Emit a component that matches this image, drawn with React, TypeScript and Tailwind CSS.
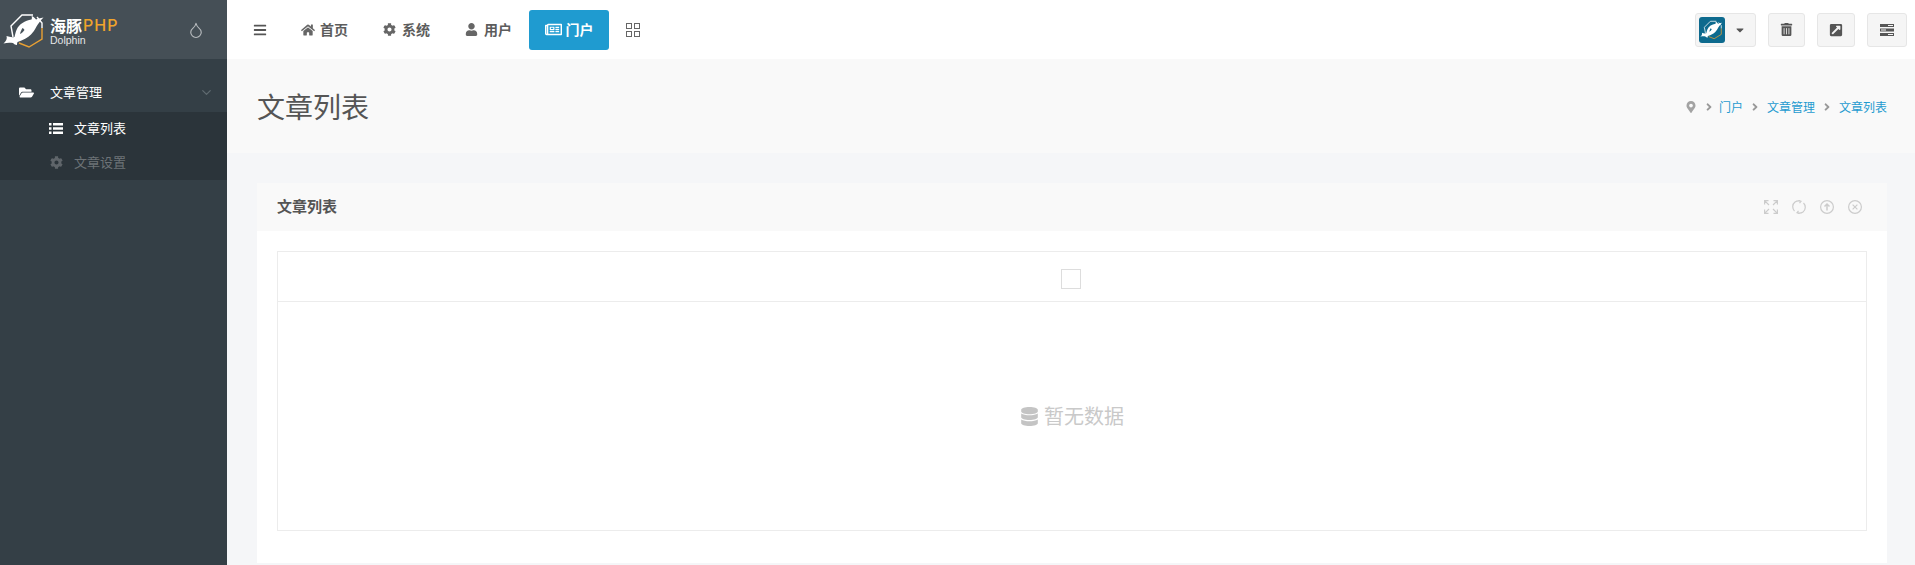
import React from 'react';
import { FaAngleRight, FaBars, FaCaretDown, FaCog, FaDatabase, FaExternalLinkSquareAlt, FaFolderOpen, FaHome, FaMapMarkerAlt, FaRegNewspaper, FaTrashAlt, FaUser } from 'react-icons/fa';
import { ChevronDown, Droplet } from 'lucide-react';

const font = "font-['Noto_Sans_CJK_SC','Liberation_Sans',sans-serif]";

function DolphinMark({ className = '', crease = '#46525a' }: { className?: string; crease?: string }) {
  return (
    <svg viewBox="0 0 44 36" className={className} fill="none">
      <path d="M39 15V26L26 34L16 30" stroke="#e9a033" strokeWidth="1.4" />
      <path d="M39 15V10L34 4" stroke="#fff" strokeWidth="1.4" />
      <path d="M10 24L8 13L19 2H30" stroke="#fff" strokeWidth="1.4" />
      <path
        d="M40.5 4.5C37 5 34.5 6 33 6.5C32 5 30.5 3.5 28.5 3C29 4 29 5.5 28.5 6.5C22 7.5 16 11 13.5 17C12.5 19.5 12 22 11.5 24C9 24.5 6 24 3.5 23C4.5 25.5 3 28.5 0.5 30.5C4 29.5 7 29.5 10 30C11 31 12.5 32 14 32C14 31 14 30 14.5 29C20 27 25 24.5 28 21.5C30 19.5 32 16.5 33.5 13.5C35 11 37.5 7.5 40.5 4.5Z"
        fill="#fff"
      />
      <path d="M19.5 15C18.5 16.5 17.5 18.5 17 21C19 20 20.5 18.5 21.5 17C21 16 20.3 15.5 19.5 15Z" fill={crease} />
    </svg>
  );
}

function ListIcon() {
  return (
    <svg viewBox="0 0 14 11" className="w-[14px] h-[11px]" fill="#fff">
      <path d="M0 0h2.5v2.5H0zM4 0h10v2.5H4zM0 4.2h2.5v2.5H0zM4 4.2h10v2.5H4zM0 8.4h2.5v2.5H0zM4 8.4h10v2.5H4z" />
    </svg>
  );
}

function GridIcon() {
  return (
    <svg viewBox="0 0 14 14" className="w-[14px] h-[14px]" fill="none" stroke="#666" strokeWidth="1">
      <rect x="0.5" y="0.5" width="5" height="5" />
      <rect x="8.5" y="0.5" width="5" height="5" />
      <rect x="0.5" y="8.5" width="5" height="5" />
      <rect x="8.5" y="8.5" width="5" height="5" />
    </svg>
  );
}

function ServerIcon() {
  return (
    <svg viewBox="0 0 14 12" className="w-[14px] h-[12px]">
      <path d="M0 0h14v3H0zM0 4.5h14v3H0zM0 9h14v3H0z" fill="#555" />
      <path d="M8 1h5v1H8zM1 5.5h5v1H1zM8 10h5v1H8z" fill="#f5f5f5" />
    </svg>
  );
}

function BlockTools() {
  return (
    <div className="flex items-center gap-[14px]">
      <svg viewBox="0 0 14 14" className="w-[14px] h-[14px]" fill="none" stroke="#ccc" strokeWidth="1.2">
        <path d="M0.6 4.5V0.6H4.5M0.6 0.6L5 5M13.4 4.5V0.6H9.5M13.4 0.6L9 5M0.6 9.5V13.4H4.5M0.6 13.4L5 9M13.4 9.5V13.4H9.5M13.4 13.4L9 9" />
      </svg>
      <svg viewBox="0 0 14 14" className="w-[14px] h-[14px]" fill="none" stroke="#ccc" strokeWidth="1.2">
        <path d="M2.5 11C0 8.5 0.2 4 3 2C4.8 0.8 6.5 0.6 8 1" />
        <path d="M11.5 3C14 5.5 13.8 10 11 12C9.2 13.2 7.5 13.4 6 13" />
        <path d="M6.5 0.4L9 1.3L7.5 3.2M7.5 13.6L5 12.7L6.5 10.8" />
      </svg>
      <svg viewBox="0 0 14 14" className="w-[14px] h-[14px]" fill="none" stroke="#ccc" strokeWidth="1.2">
        <circle cx="7" cy="7" r="6.4" />
        <path d="M7 10.5V4M4.5 6.5L7 4L9.5 6.5" strokeWidth="1.5" />
      </svg>
      <svg viewBox="0 0 14 14" className="w-[14px] h-[14px]" fill="none" stroke="#ccc" strokeWidth="1.2">
        <circle cx="7" cy="7" r="6.4" />
        <path d="M4.6 4.6L9.4 9.4M9.4 4.6L4.6 9.4" />
      </svg>
    </div>
  );
}

function Sidebar() {
  return (
    <aside className="w-[227px] shrink-0 bg-[#343f46] flex flex-col">
      <div className="h-[59px] bg-[#454f56] flex items-center pl-[3px] pr-[22px] relative">
        <DolphinMark className="w-[44px] h-[36px] mt-[2px] shrink-0" />
        <div className="ml-[3px] flex flex-col mt-[4px]">
          <div className="flex items-center h-[16px] leading-[16px]">
            <span className="text-[16px] leading-[16px] font-bold text-white">海豚</span>
            <span className="text-[16px] leading-[16px] font-['Inter',sans-serif] font-medium text-[#f0a42c] tracking-[1px] ml-[1px]">PHP</span>
          </div>
          <span className="text-[10.5px] leading-[10.5px] mt-[2px] text-[#e4e6e7] font-['Liberation_Sans',sans-serif]">Dolphin</span>
        </div>
        <Droplet size={18} color="#b8bcbf" strokeWidth={1.5} className="ml-auto" />
      </div>
      <div className="mt-[15px]">
        <div className="h-[38px] flex items-center pl-[19px] pr-[13px] text-white text-[13px] pb-[2px]">
          <FaFolderOpen size={15} color="#fff" />
          <span className="ml-[16px]">文章管理</span>
          <ChevronDown size={15} color="#5f6a70" className="ml-auto" />
        </div>
        <div className="bg-[#2b343a] h-[68px]">
          <div className="h-[32px] flex items-center pl-[49px] text-white text-[13px]">
            <ListIcon />
            <span className="ml-[11px]">文章列表</span>
          </div>
          <div className="h-[36px] flex items-center pl-[50px] text-[#6d7377] text-[13px]">
            <FaCog size={13} color="#5f656a" />
            <span className="ml-[11px]">文章设置</span>
          </div>
        </div>
      </div>
    </aside>
  );
}

function TopBar() {
  return (
    <header className="h-[59px] bg-white shrink-0 flex items-center pl-[26px] pr-[8px]">
      <FaBars size={14} color="#555" />
      <div className="flex items-center ml-[34px] text-[14px] font-semibold text-[#5c5c5c]">
        <div className="w-[82px] flex items-center">
          <FaHome size={14} color="#666" />
          <span className="ml-[5px]">首页</span>
        </div>
        <div className="w-[82px] flex items-center">
          <FaCog size={13} color="#666" />
          <span className="ml-[6px]">系统</span>
        </div>
        <div className="w-[64px] flex items-center">
          <FaUser size={13} color="#666" />
          <span className="ml-[6px]">用户</span>
        </div>
        <div className="w-[80px] h-[40px] rounded-[3px] bg-[#1f9bd0] text-white flex items-center justify-center">
          <FaRegNewspaper size={17} color="#fff" />
          <span className="ml-[4px]">门户</span>
        </div>
        <div className="ml-[17px]">
          <GridIcon />
        </div>
      </div>
      <div className="ml-auto flex items-center">
        <div className="w-[61px] h-[34px] rounded-[3px] border border-[#e6e6e6] bg-[#f5f5f5] flex items-center pl-[3px]">
          <div className="w-[26px] h-[26px] rounded-[3px] bg-[#0d6a8e] flex items-center justify-center">
            <DolphinMark className="w-[24px] h-[20px]" crease="#0d6a8e" />
          </div>
          <FaCaretDown size={12} color="#555" className="ml-[9px]" />
        </div>
        <div className="w-[37px] h-[34px] ml-[12px] rounded-[3px] border border-[#e6e6e6] bg-[#f5f5f5] flex items-center justify-center">
          <FaTrashAlt size={13} color="#555" />
        </div>
        <div className="w-[38px] h-[34px] ml-[12px] rounded-[3px] border border-[#e6e6e6] bg-[#f5f5f5] flex items-center justify-center">
          <FaExternalLinkSquareAlt size={14} color="#555" />
        </div>
        <div className="w-[40px] h-[34px] ml-[12px] rounded-[3px] border border-[#e6e6e6] bg-[#f5f5f5] flex items-center justify-center">
          <ServerIcon />
        </div>
      </div>
    </header>
  );
}

function PageHead() {
  return (
    <div className="h-[94px] bg-[#f9f9f9] shrink-0 flex items-center justify-between pl-[30px] pr-[28px]">
      <h1 className="text-[28px] text-[#555] font-normal leading-none">文章列表</h1>
      <div className="flex items-center text-[12px] text-[#1f9bd0] mt-[1px]">
        <FaMapMarkerAlt size={12} color="#a3a3a3" />
        <FaAngleRight size={12} color="#999" className="ml-[6px] mr-[4px]" />
        <span>门户</span>
        <FaAngleRight size={12} color="#999" className="mx-[6px]" />
        <span>文章管理</span>
        <FaAngleRight size={12} color="#999" className="mx-[6px]" />
        <span>文章列表</span>
      </div>
    </div>
  );
}

function ListBlock() {
  return (
    <section className="mt-[30px] mx-[30px] mr-[28px] bg-white flex flex-col h-[380px] shrink-0">
      <div className="h-[48px] bg-[#f9f9f9] flex items-center justify-between pl-[20px] pr-[25px]">
        <h3 className="text-[15px] font-semibold text-[#555] mb-[2px]">文章列表</h3>
        <BlockTools />
      </div>
      <div className="px-[20px] pt-[20px]">
        <div className="h-[280px] border border-[#ececec] flex flex-col">
          <div className="h-[50px] border-b border-[#ececec] flex items-center justify-center shrink-0">
            <div className="w-[20px] h-[20px] border border-[#ddd] bg-white mt-[4px] mr-[2px]" />
          </div>
          <div className="flex-1 flex items-center justify-center text-[20px] text-[#c9c9c9]">
            <FaDatabase size={19} color="#c4c4c4" />
            <span className="ml-[5px]">暂无数据</span>
          </div>
        </div>
      </div>
    </section>
  );
}

export default function App() {
  return (
    <div className={`flex h-screen overflow-hidden bg-[#f5f6f8] ${font}`}>
      <Sidebar />
      <main className="flex-1 min-w-0 flex flex-col">
        <TopBar />
        <PageHead />
        <ListBlock />
      </main>
    </div>
  );
}
